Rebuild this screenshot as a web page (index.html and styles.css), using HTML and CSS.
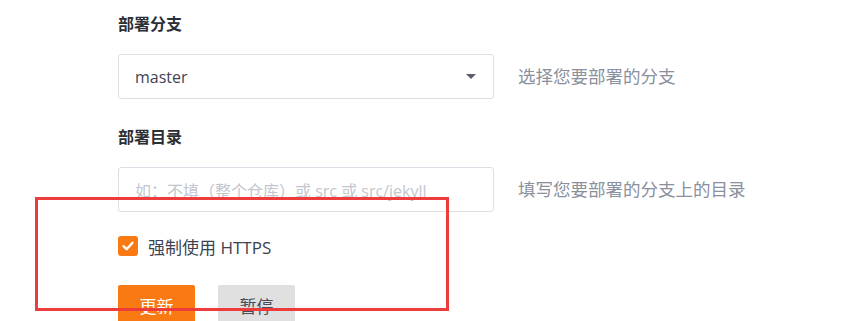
FILE: index.html
```html
<!DOCTYPE html>
<html lang="zh-CN">
<head>
<meta charset="utf-8">
<title>部署设置</title>
<link rel="stylesheet" href="styles.css">
</head>
<body>
<div class="page">
  <div class="group">
    <div class="label">部署分支</div>
    <div class="row">
      <div class="select">
        <span class="select-value">master</span>
        <span class="caret"></span>
      </div>
      <span class="hint">选择您要部署的分支</span>
    </div>
  </div>
  <div class="group group-next">
    <div class="label">部署目录</div>
    <div class="row">
      <div class="input"><span class="placeholder">如：不填（整个仓库）或 src 或 src/jekyll</span></div>
      <span class="hint">填写您要部署的分支上的目录</span>
    </div>
  </div>
  <div class="check-row">
    <span class="checkbox">
      <svg width="14" height="14" viewBox="0 0 14 14"><path d="M2.5 7.2 L5.6 10.2 L11.5 3.8" fill="none" stroke="#fff" stroke-width="2.4" stroke-linecap="round" stroke-linejoin="round"/></svg>
    </span>
    <span class="check-label">强制使用 HTTPS</span>
  </div>
  <div class="buttons">
    <button class="btn btn-primary">更新</button>
    <button class="btn btn-default">暂停</button>
  </div>
  <div class="highlight"></div>
</div>
</body>
</html>
```

FILE: styles.css
```css
html, body {
  margin: 0;
  padding: 0;
  background: #ffffff;
}
body {
  font-family: "Open Sans", "Noto Sans CJK SC", sans-serif;
  font-size: 16px;
  color: #40485b;
  overflow: hidden;
}
.page {
  position: relative;
  padding: 13px 0 0 118px;
  height: 321px;
  box-sizing: border-box;
}
.label {
  height: 20px;
  line-height: 20px;
  font-size: 16px;
  font-weight: 700;
  color: #2b2f36;
  font-family: "Noto Sans CJK SC", sans-serif;
  margin-bottom: 21px;
}
.group-next {
  margin-top: 27px;
}
.row {
  display: flex;
  align-items: center;
  gap: 24px;
}
.select, .input {
  width: 376px;
  height: 45px;
  box-sizing: border-box;
  border: 1px solid #dcdfe6;
  border-radius: 3px;
  display: flex;
  align-items: center;
  padding: 0 16px;
}
.select {
  justify-content: space-between;
}
.select-value {
  color: #3f4555;
  font-size: 16px;
}
.caret {
  width: 0;
  height: 0;
  border-left: 5px solid transparent;
  border-right: 5px solid transparent;
  border-top: 5px solid #5a5f6b;
  margin-right: 1px;
}
.placeholder {
  color: #c3c6cd;
  font-size: 16px;
  white-space: nowrap;
}
.hint {
  color: #8a909c;
  font-size: 17.5px;
  font-family: "Noto Sans CJK SC", sans-serif;
  margin-top: -2px;
}
.check-row {
  display: flex;
  align-items: center;
  gap: 10px;
  margin-top: 24px;
  height: 20px;
}
.checkbox {
  width: 20px;
  height: 20px;
  border-radius: 3px;
  background: #f97a12;
  display: flex;
  align-items: center;
  justify-content: center;
}
.check-label {
  font-size: 17px;
  color: #3d4250;
}
.buttons {
  display: flex;
  gap: 23px;
  margin-top: 29px;
}
.btn {
  width: 77px;
  height: 40px;
  border: none;
  border-radius: 2px;
  font-family: "Noto Sans CJK SC", sans-serif;
  font-size: 17px;
  padding: 0;
}
.btn-primary {
  background: #f97a12;
  color: #ffffff;
}
.btn-default {
  background: #e0e0e0;
  color: #474c59;
}
.highlight {
  position: absolute;
  left: 35px;
  top: 197px;
  width: 414px;
  height: 114px;
  box-sizing: border-box;
  border: 3px solid #ee3b3b;
  pointer-events: none;
}
```
